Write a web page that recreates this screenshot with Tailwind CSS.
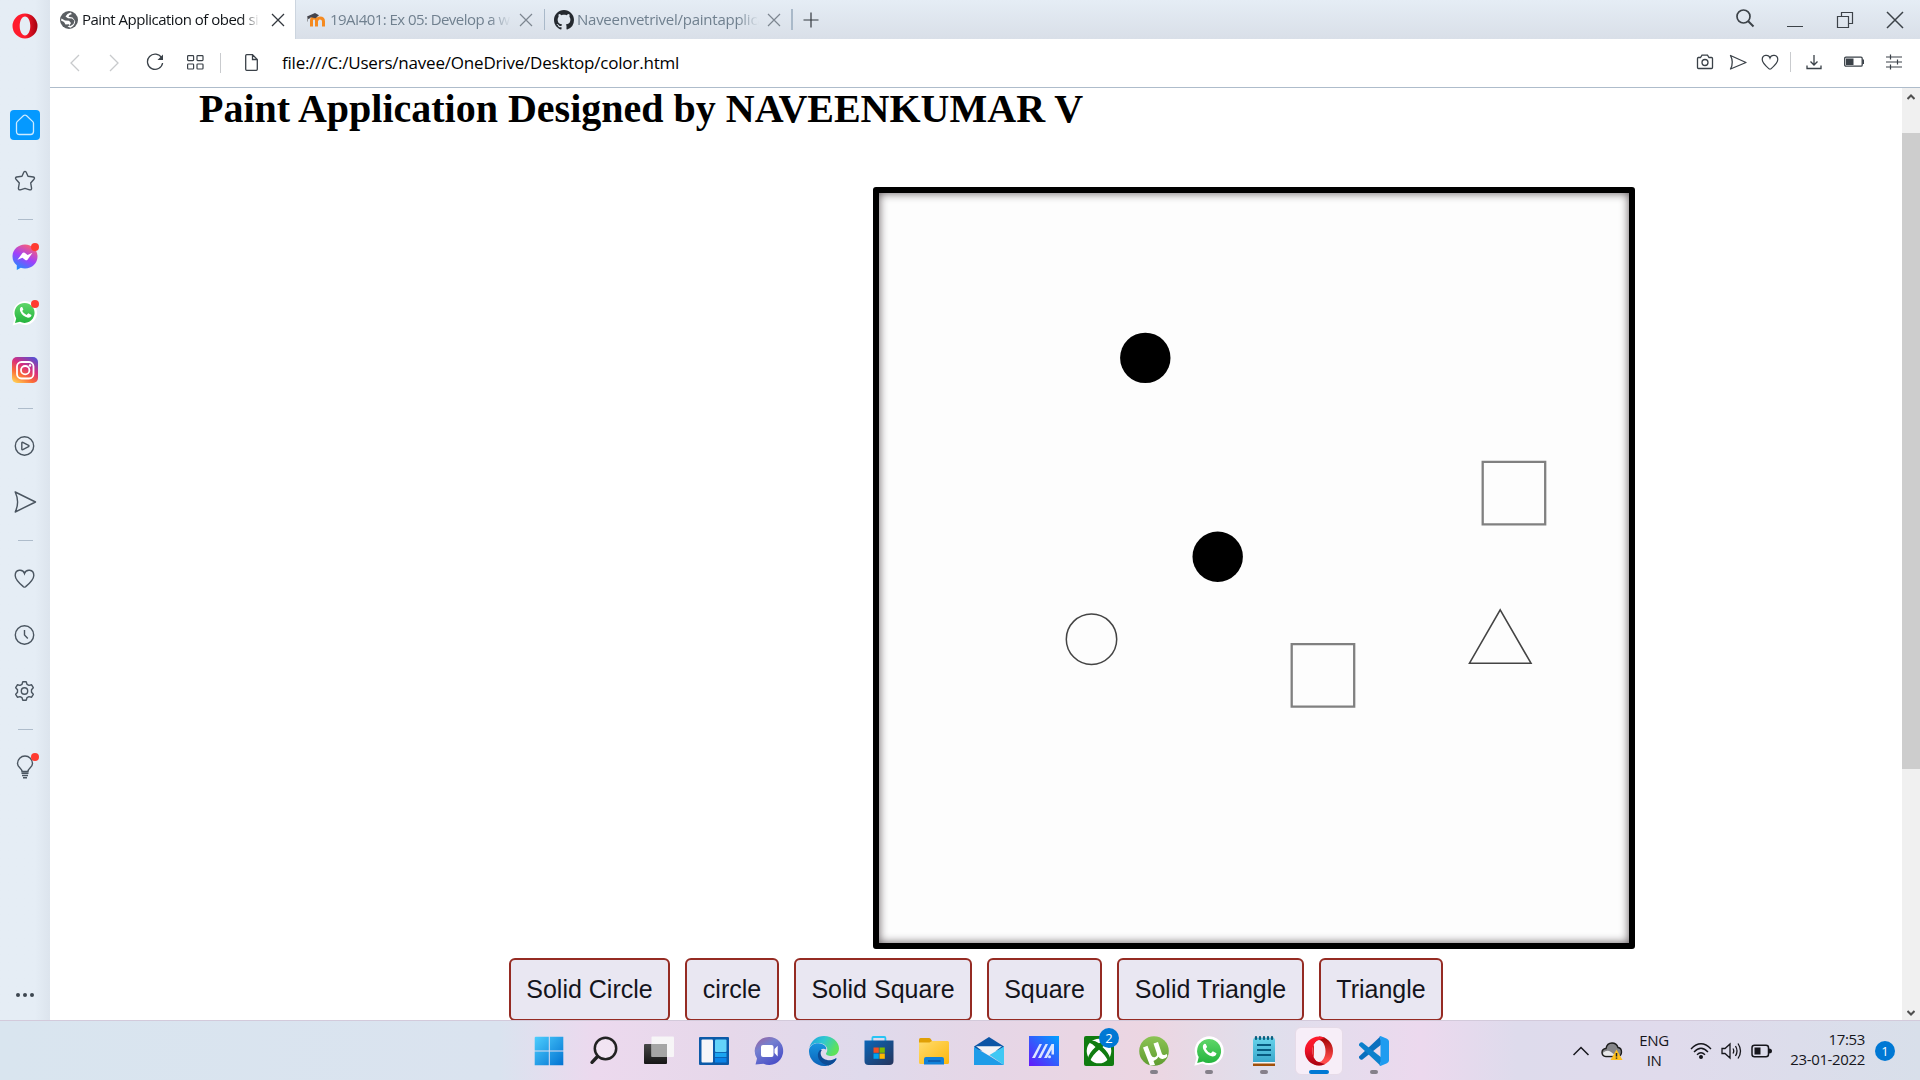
<!DOCTYPE html>
<html lang="en">
<head>
<meta charset="utf-8">
<title>Paint Application</title>
<script src="https://cdn.jsdelivr.net/npm/@tailwindcss/browser@4"></script>
</head>
<body class="w-[1920px] h-[1080px] overflow-hidden flex flex-col bg-white font-['Open_Sans','Noto_Sans',sans-serif]">
<svg class="absolute size-0">
  <defs>
    <linearGradient id="op" x1="0" y1="0" x2="1" y2="0"><stop offset="0" stop-color="#ff1b2d"/><stop offset=".5" stop-color="#ff1b2d"/><stop offset="1" stop-color="#a3000f"/></linearGradient>
    <linearGradient id="op1" x1="0" y1="0" x2="0" y2="1"><stop offset="0" stop-color="#ff1b2d"/><stop offset=".4" stop-color="#f5142a"/><stop offset="1" stop-color="#a50010"/></linearGradient>
    <linearGradient id="op2" x1="0" y1="0" x2="0" y2="1"><stop offset="0" stop-color="#9c0000"/><stop offset=".8" stop-color="#ff4b4b"/></linearGradient>
    <linearGradient id="ms" x1=".2" y1="1" x2=".7" y2="0"><stop offset="0" stop-color="#1393ff"/><stop offset=".5" stop-color="#a040fb"/><stop offset="1" stop-color="#ff6070"/></linearGradient>
    <linearGradient id="wa" x1="0" y1="0" x2="0" y2="1"><stop offset="0" stop-color="#5fd669"/><stop offset="1" stop-color="#24b43e"/></linearGradient>
    <linearGradient id="ig" x1=".2" y1="1" x2=".8" y2="0"><stop offset="0" stop-color="#ffc850"/><stop offset=".3" stop-color="#fb6a38"/><stop offset=".6" stop-color="#d82d7e"/><stop offset="1" stop-color="#5a4fd0"/></linearGradient>
    <linearGradient id="win" gradientUnits="userSpaceOnUse" x1="0" y1="0" x2="30" y2="30"><stop offset="0" stop-color="#4fd0ff"/><stop offset="1" stop-color="#0070d0"/></linearGradient>
    <linearGradient id="tv" x1="0" y1="0" x2="0" y2="1"><stop offset="0" stop-color="#484848"/><stop offset="1" stop-color="#161616"/></linearGradient>
    <linearGradient id="chat" x1="0" y1="0" x2=".6" y2="1"><stop offset="0" stop-color="#a0609a"/><stop offset=".4" stop-color="#7480d0"/><stop offset="1" stop-color="#4b50c8"/></linearGradient>
    <linearGradient id="ed1" x1="0" y1="0" x2="1" y2=".4"><stop offset="0" stop-color="#1a9fe0"/><stop offset=".5" stop-color="#30c8d0"/><stop offset="1" stop-color="#5ee25a"/></linearGradient>
    <linearGradient id="ed2" x1="0" y1="0" x2="0" y2="1"><stop offset="0" stop-color="#1795e0"/><stop offset="1" stop-color="#0c62b8"/></linearGradient>
    <linearGradient id="st" x1="0" y1="0" x2="1" y2="1"><stop offset="0" stop-color="#0a66b8"/><stop offset="1" stop-color="#26355c"/></linearGradient>
    <linearGradient id="fo" x1="0" y1="0" x2="1" y2="1"><stop offset="0" stop-color="#ffdc6e"/><stop offset="1" stop-color="#fcb70c"/></linearGradient>
    <linearGradient id="ma" x1="0" y1="1" x2="1" y2="0"><stop offset="0" stop-color="#6418fa"/><stop offset="1" stop-color="#00a2ff"/></linearGradient>
    <linearGradient id="ut" x1="0" y1="0" x2="0" y2="1"><stop offset="0" stop-color="#8cc455"/><stop offset="1" stop-color="#5f9c30"/></linearGradient>
    <linearGradient id="np" x1="0" y1="0" x2="0" y2="1"><stop offset="0" stop-color="#66d2ea"/><stop offset="1" stop-color="#3aa8cc"/></linearGradient>
  </defs>
</svg>

<div class="flex h-[1020px] shrink-0">
  <!-- Opera sidebar -->
  <aside class="w-[50px] shrink-0 flex flex-col items-center text-[#4a5560] bg-linear-to-r from-[#e5edf5] from-70% to-[#dce4ed]">
    <div class="h-[97px] pt-[13px]">
      <svg width="26" height="26" viewBox="0 0 26 26"><path fill="url(#op)" fill-rule="evenodd" d="M13 .5a12.5 12.5 0 1 0 0 25 12.5 12.5 0 1 0 0-25zM13 3.6c3 0 5.3 4 5.3 9.4s-2.300 9.400-5.300 9.400S7.700 18.400 7.700 13 10 3.600 13 3.600z"/></svg>
    </div>
    <div class="h-14 flex items-center"><div class="size-[30px] rounded bg-[#0599ff] flex items-center justify-center">
      <svg width="20" height="22" viewBox="0 0 20 22" fill="none" stroke="#cdeaff" stroke-width="1.300"><path d="M1.500 9.200Q1.500 8.300 2.200 7.600L8.600 1.600Q10 .5 11.400 1.600L17.800 7.600Q18.500 8.300 18.500 9.200V17.500Q18.500 20.500 15.500 20.500H4.500Q1.500 20.500 1.500 17.500Z"/></svg></div></div>
    <div class="h-14 flex items-center"><svg width="22" height="22" viewBox="0 0 22 22" fill="none" stroke="currentColor" stroke-width="1.400" stroke-linejoin="round"><path d="M9.800 2.200Q11 .6 12.200 2.200L14 6.200 19.400 7Q21.200 7.600 20 9.200L16.700 13 17.600 18.300Q17.600 20.200 15.600 19.800L11 18.400 6.400 19.800Q4.400 20.200 4.400 18.300L5.300 13 2 9.200Q.8 7.600 2.600 7L8 6.200Z"/></svg></div>
    <div class="h-5 flex items-center"><div class="w-[15px] h-px bg-[#aebccb]"></div></div>
    <div class="h-14 flex items-center relative"><svg width="26" height="26" viewBox="0 0 26 26"><path fill="url(#ms)" d="M13 .5C6 .5.5 5.700.5 12.500c0 3.800 1.600 6.700 4.300 8.800V26l4-2.200c1.300.5 2.700.7 4.200.7 7 0 12.500-5.200 12.500-12S20 .5 13 .5z"/><path fill="#fff" d="M5.500 15.800l5-6.800q1-1 2.200-.2l2.900 2.300 4.900-2.300-5 6.900q-1 1-2.200.2l-2.900-2.200z"/></svg><span class="absolute left-[19px] top-[14px] size-2 rounded-full bg-[#ff3b30]"></span></div>
    <div class="h-14 flex items-center relative"><svg width="26" height="26" viewBox="0 0 26 26"><path fill="#fff" d="M.5 25.500l2-6.700A12 12 0 1 1 7.400 23.600z"/><path fill="url(#wa)" d="M3 23l1.200-4.600A10 10 0 1 1 8 21.800z"/><path fill="#fff" d="M9.200 7q-2 1.300-1 4.200 2.200 5 7.800 6.600 3 0 3.500-2.800l-3.200-1.700-1.700 1.700q-3-1.200-4.400-4l1.200-1.500-1.200-2.500z"/></svg><span class="absolute left-[19px] top-[15px] size-2 rounded-full bg-[#ff3b30]"></span></div>
    <div class="h-[57px] flex items-center"><svg width="26" height="26" viewBox="0 0 26 26" fill="none" stroke="#fff"><rect width="26" height="26" rx="5" fill="url(#ig)" stroke="none"/><rect x="5" y="5" width="16.500" height="16.500" rx="4.500" stroke-width="1.800"/><circle cx="13.200" cy="13.200" r="4.200" stroke-width="1.800"/><circle cx="18" cy="8.500" r="1.200" fill="#fff" stroke="none"/></svg></div>
    <div class="h-5 flex items-center"><div class="w-[15px] h-px bg-[#aebccb]"></div></div>
    <div class="h-14 flex items-center"><svg width="22" height="22" viewBox="0 0 22 22" fill="none" stroke="currentColor" stroke-width="1.400" stroke-linejoin="round"><circle cx="10.500" cy="11" r="9.200"/><path d="M7.800 8v6q0 1 1 .7l5.800-3q.8-.7 0-1.300l-5.800-3q-1-.4-1 .6z"/></svg></div>
    <div class="h-14 flex items-center"><svg width="24" height="24" viewBox="0 0 24 24" fill="none" stroke="currentColor" stroke-width="1.400" stroke-linejoin="round"><path d="M2.200 2L22.500 12 2.200 22q4.800-10 0-20z"/></svg></div>
    <div class="h-[21px] flex items-center"><div class="w-[15px] h-px bg-[#aebccb]"></div></div>
    <div class="h-14 flex items-center"><svg width="22" height="20" viewBox="0 0 22 20" fill="none" stroke="currentColor" stroke-width="1.400"><path d="M10.500 4.500C9-.2 1.200 0 1.200 6.400c0 4.300 4.700 8.300 8.200 11.300q1.100.8 2.200 0c3.500-3 8.200-7 8.200-11.300C19.800 0 12 -.2 10.500 4.500z"/></svg></div>
    <div class="h-14 flex items-center"><svg width="22" height="22" viewBox="0 0 22 22" fill="none" stroke="currentColor" stroke-width="1.400"><circle cx="10.500" cy="11" r="9.200"/><path d="M10.500 6v5l3.300 3.500"/></svg></div>
    <div class="h-14 flex items-center"><svg width="22" height="22" viewBox="0 0 22 22" fill="none" stroke="currentColor" stroke-width="1.400" stroke-linejoin="round"><circle cx="10.500" cy="11" r="3.200"/><path d="M8.800 1.700h3.400l.8 2.600 2 1.100 2.600-.6 1.700 2.900-1.800 2v2.600l1.800 2-1.700 2.900-2.600-.6-2 1.100-.8 2.600H8.800L8 17.700l-2-1.100-2.600.6-1.700-2.900 1.800-2V9.700l-1.800-2 1.700-2.900 2.600.6 2-1.100z"/></svg></div>
    <div class="h-5 flex items-center"><div class="w-[15px] h-px bg-[#aebccb]"></div></div>
    <div class="h-14 flex items-center relative"><svg width="18" height="24" viewBox="0 0 18 24" fill="none" stroke="currentColor" stroke-width="1.400"><path d="M6 16.500C6 13.500 1.500 12.500 1.500 8.500a7.500 7.500 0 0 1 15 0c0 4-4.500 5-4.500 8zM5.500 18.300h7M6 20.500h6M7 22.800h4"/></svg><span class="absolute left-[15px] top-[14px] size-2 rounded-full bg-[#ff3b30]"></span></div>
    <div class="mt-auto h-[51px] flex gap-[3px]"><i class="size-1 mt-6 rounded-full bg-[#3d4650]"></i><i class="size-1 mt-6 rounded-full bg-[#3d4650]"></i><i class="size-1 mt-6 rounded-full bg-[#3d4650]"></i></div>
  </aside>

  <div class="w-[1870px] flex flex-col">
    <!-- Tab strip -->
    <div class="h-[39px] shrink-0 flex bg-linear-to-b from-[#e5edf5] to-[#d9dfe8] text-[15px] leading-[39px] whitespace-nowrap">
      <div class="w-[246px] bg-white flex items-center pl-[10px] border-r border-[#ccd5df]">
        <svg width="18" height="18" viewBox="0 0 18 18"><circle cx="9" cy="9" r="9" fill="#5a5e62"/><path fill="#fff" d="M10.500 1.500L7.500 3 5.500 5.500 8 7.200l4 .3 2.500 2.300-1 3.200-3 2-1-.5 1.500-2.500-2-2.200L5 9.500 1.500 7.500 1 9.500 4 11l1.500 2.500L9 13.300l.5 1.200-2 1 3 1.200q4.500-2 4.700-6.700L12.500 6.500 8.500 5.700 9.500 4l2.500-1z"/></svg>
        <span class="ml-[4px] w-[181px] overflow-hidden text-[#101418] tracking-[-0.5px] mask-r-from-88% mask-r-to-98%">Paint Application of obed si</span>
        <svg class="ml-2" width="14" height="14" viewBox="0 0 14 14" stroke="#33383e" stroke-width="1.300"><path d="M1 1l12 12M13 1L1 13"/></svg>
      </div>
      <div class="w-[249px] flex items-center pl-[10px] relative text-[#70808f]">
        <svg width="20" height="16" viewBox="0 0 20 16"><path fill="none" stroke="#f58a20" stroke-width="3" d="M5.500 14.500V8.500q0-2.500 2.500-2.500t2.500 2.500V14.500M11 8.500Q11.500 6 14 6q3.500 0 3.500 3.500v5"/><path fill="#44444c" d="M1 4.500L9 1l4 2.200-3.500 3L5 5.200 2.500 7.300z"/><path stroke="#777" stroke-width=".7" d="M1.500 5v4.500"/></svg>
        <span class="ml-[4px] w-[181px] overflow-hidden tracking-[-0.55px] mask-r-from-88% mask-r-to-100%">19AI401: Ex 05: Develop a w</span>
        <svg class="ml-2" width="14" height="14" viewBox="0 0 14 14" stroke="#7d8690" stroke-width="1.200"><path d="M1 1l12 12M13 1L1 13"/></svg>
        <i class="absolute right-0 top-[9px] w-px h-[21px] bg-[#a9b9c9]"></i>
      </div>
      <div class="w-[248px] flex items-center pl-[9px] relative text-[#70808f]">
        <svg width="20" height="20" viewBox="0 0 16 16"><path fill="#24292f" d="M8 0C3.580 0 0 3.580 0 8c0 3.540 2.290 6.530 5.470 7.590.4.070.55-.17.55-.38 0-.19-.01-.82-.01-1.490-2.010.37-2.530-.49-2.690-.94-.09-.23-.48-.94-.82-1.130-.28-.15-.68-.52-.01-.53.63-.01 1.080.58 1.230.82.72 1.210 1.870.87 2.330.66.070-.52.280-.87.510-1.070-1.780-.2-3.640-.89-3.640-3.950 0-.87.310-1.590.82-2.150-.08-.2-.36-1.020.08-2.120 0 0 .67-.21 2.200.82.640-.18 1.320-.27 2-.27s1.360.090 2 .27c1.530-1.040 2.200-.82 2.200-.82.440 1.100.160 1.920.080 2.120.510.560.820 1.270.820 2.150 0 3.070-1.870 3.750-3.650 3.950.290.250.540.730.540 1.480 0 1.070-.01 1.930-.01 2.200 0 .210.150.460.550.380A8.010 8.010 0 0 0 16 8c0-4.420-3.580-8-8-8z"/></svg>
        <span class="ml-[3px] w-[182px] overflow-hidden tracking-[-0.25px] mask-r-from-88% mask-r-to-100%">Naveenvetrivel/paintapplica</span>
        <svg class="ml-2" width="14" height="14" viewBox="0 0 14 14" stroke="#7d8690" stroke-width="1.200"><path d="M1 1l12 12M13 1L1 13"/></svg>
        <i class="absolute right-0 top-[9px] w-[2px] h-[21px] bg-[#a9b9c9]"></i>
      </div>
      <div class="pl-[10px] flex items-center"><svg width="16" height="16" viewBox="0 0 16 16" stroke="#33383e" stroke-width="1.200"><path d="M8 .5v15M.5 8h15"/></svg></div>
      <div class="ml-auto flex text-[#3c4248]">
        <div class="w-[50px] flex items-center justify-center"><svg class="mb-1" width="20" height="20" viewBox="0 0 20 20" fill="none" stroke="currentColor"><circle cx="8.500" cy="8.500" r="6.500" stroke-width="1.700"/><path stroke-width="2" d="M13 13l5.500 5.500"/></svg></div>
        <div class="w-[50px] flex justify-center"><i class="w-4 h-px mt-[26px] bg-[#3c4248]"></i></div>
        <div class="w-[50px] flex items-center justify-center"><svg width="18" height="18" viewBox="0 0 18 18" fill="none" stroke="currentColor" stroke-width="1.200"><path d="M1.500 5.500h11v11h-11zM5.500 5.500v-4h11v11h-4"/></svg></div>
        <div class="w-[50px] flex items-center justify-center"><svg width="18" height="18" viewBox="0 0 18 18" stroke="currentColor" stroke-width="1.500"><path d="M1 1l16 16M17 1L1 17"/></svg></div>
      </div>
    </div>
    <!-- Address bar -->
    <div class="h-[49px] shrink-0 flex items-center bg-white border-b border-[#aebccb] text-[#3a4148]">
      <svg class="ml-[19px]" width="11" height="18" viewBox="0 0 11 18" fill="none" stroke="#c8cacc" stroke-width="1.300"><path d="M10 1L2 9l8 8"/></svg>
      <svg class="ml-[29px]" width="11" height="18" viewBox="0 0 11 18" fill="none" stroke="#c8cacc" stroke-width="1.300"><path d="M1 1l8 8-8 8"/></svg>
      <svg class="ml-[26px] mb-0.5" width="18" height="18" viewBox="0 0 18 18" fill="none" stroke="currentColor" stroke-width="1.300"><path d="M15.700 5A7.600 7.600 0 1 0 16.600 10"/><path fill="currentColor" stroke="none" d="M17 1.500V7h-5.500z"/></svg>
      <svg class="ml-[23px] mb-0.5" width="17" height="15" viewBox="0 0 17 15" fill="none" stroke="currentColor" stroke-width="1.200"><rect x=".6" y=".6" width="6" height="5" rx=".8"/><rect x="10" y=".6" width="6" height="5" rx=".8"/><rect x=".6" y="9" width="6" height="5" rx=".8"/><rect x="10" y="9" width="6" height="5" rx=".8"/></svg>
      <i class="ml-4 w-px h-5 bg-[#c9cbce]"></i>
      <svg class="ml-6 mb-0.5" width="13" height="17" viewBox="0 0 13 17" fill="none" stroke="currentColor" stroke-width="1.300"><path d="M.7 1.700q0-1 1-1H7.500l4.800 4.800v9.800q0 1-1 1H1.700q-1 0-1-1zM7.500.7v4.800h4.800"/></svg>
      <span class="ml-[24px] mb-px text-[17px] tracking-[-0.2px] leading-6 text-[#000] whitespace-nowrap">file:///C:/Users/navee/OneDrive/Desktop/color.html</span>
      <div class="ml-auto mr-[6px] mb-0.5 flex items-center">
        <div class="w-[34px] flex justify-center"><svg width="18" height="16" viewBox="0 0 18 16" fill="none" stroke="currentColor" stroke-width="1.300"><path d="M2 3.500h2.500L6 1.200h5.500L13 3.500h2.500q1 0 1 1v9q0 1-1 1h-13q-1 0-1-1v-9q0-1 1-1"/><circle cx="9" cy="8.500" r="3"/></svg></div>
        <div class="w-8 flex justify-center"><svg width="18" height="16" viewBox="0 0 18 16" fill="none" stroke="currentColor" stroke-width="1.300" stroke-linejoin="round"><path d="M1.500 1.500L17 8.500 1.500 15q3.600-6.500 0-13.500z"/></svg></div>
        <div class="w-8 flex justify-center"><svg width="18" height="17" viewBox="0 0 22 20" fill="none" stroke="currentColor" stroke-width="1.500"><path d="M11 4.500C9.500-.2 1.500 0 1.500 6.400c0 4.300 4.800 8.300 8.300 11.300q1.200.8 2.400 0c3.500-3 8.300-7 8.300-11.300C20.500 0 12.500-.2 11 4.500z"/></svg></div>
        <div class="w-2 flex justify-center"><i class="w-px h-5 bg-[#c9cbce]"></i></div>
        <div class="w-10 flex justify-center"><svg width="16" height="16" viewBox="0 0 16 16" fill="none" stroke="currentColor" stroke-width="1.300"><path d="M8 1v9.500M4.500 7.500L8 11l3.500-3.500M1 11.500v3h14v-3"/></svg></div>
        <div class="w-10 flex justify-center"><svg width="20" height="12" viewBox="0 0 20 12"><rect x=".7" y="1.200" width="17.500" height="9" rx="1.200" fill="none" stroke="currentColor" stroke-width="1.300"/><path fill="currentColor" d="M2 2.500h7.500v6.500H2zM18.500 3.500H20v4.500h-1.500z"/></svg></div>
        <div class="w-10 flex justify-center"><svg width="16" height="16" viewBox="0 0 16 16" stroke="currentColor" stroke-width="1.200"><path d="M0 3h16M0 8h16M0 13h16M4.500 .5v5M11.500 5.500v5M4.500 10.500v5"/></svg></div>
      </div>
    </div>
    <!-- Page -->
    <div class="h-[932px] flex">
      <main class="w-[1852px] h-full overflow-hidden bg-white">
        <h1 class="ml-[149px] h-[99px] text-[40px] leading-[42px] font-bold text-black whitespace-nowrap font-['Liberation_Serif',serif]">Paint Application Designed by NAVEENKUMAR V</h1>
        <div class="ml-[823px] w-[762px] h-[762px] border-[6px] border-black rounded-[3px] bg-[#fdfdfd] shadow-[inset_0_0_10px_rgba(40,30,35,0.75)]">
          <svg width="750" height="750" viewBox="879 193 750 750" fill="none">
            <circle cx="1145.300" cy="357.900" r="25.200" fill="#000"/>
            <circle cx="1217.700" cy="556.700" r="25.200" fill="#000"/>
            <circle cx="1091.500" cy="639.200" r="25.200" stroke="#444" stroke-width="1.500"/>
            <path stroke="#808080" stroke-width="2.300" d="M1482.700 461.800h62.500v62.500h-62.500zM1291.700 644.200h62.500v62.500h-62.500z"/>
            <path stroke="#444" stroke-width="1.600" d="M1500.200 609.800L1531 663.200h-61.500z"/>
          </svg>
        </div>
        <div class="ml-[459px] mt-[9px] flex gap-[15px] text-[25px] text-[#14141c] whitespace-nowrap font-['Liberation_Sans',sans-serif]">
          <div class="w-[161px] h-[63px] border-2 border-[#952b23] rounded-[6px] bg-[#e9e7f2] flex items-center justify-center">Solid Circle</div>
          <div class="w-[94px] h-[63px] border-2 border-[#952b23] rounded-[6px] bg-[#e9e7f2] flex items-center justify-center">circle</div>
          <div class="w-[178px] h-[63px] border-2 border-[#952b23] rounded-[6px] bg-[#e9e7f2] flex items-center justify-center">Solid Square</div>
          <div class="w-[115px] h-[63px] border-2 border-[#952b23] rounded-[6px] bg-[#e9e7f2] flex items-center justify-center">Square</div>
          <div class="w-[187px] h-[63px] border-2 border-[#952b23] rounded-[6px] bg-[#e9e7f2] flex items-center justify-center">Solid Triangle</div>
          <div class="w-[124px] h-[63px] border-2 border-[#952b23] rounded-[6px] bg-[#e9e7f2] flex items-center justify-center">Triangle</div>
        </div>
      </main>
      <div class="w-[18px] h-full bg-[#f0f0f0] flex flex-col items-center">
        <div class="h-[45px] pt-[6px]"><svg width="8" height="6" viewBox="0 0 8 6" fill="none" stroke="#505050" stroke-width="2"><path d="M.5 5L4 1.500 7.500 5"/></svg></div>
        <div class="w-full h-[636px] bg-[#cdcdcd]"></div>
        <div class="mt-auto pb-[4px]"><svg width="8" height="6" viewBox="0 0 8 6" fill="none" stroke="#505050" stroke-width="2"><path d="M.5 1L4 4.500 7.500 1"/></svg></div>
      </div>
    </div>
  </div>
</div>

<!-- Windows taskbar -->
<div class="h-[60px] shrink-0 flex">
  <div class="w-full flex border-t border-[#d3cadb] bg-[linear-gradient(90deg,#d9e5ef_0,#dae3ef_26%,#ecd9ee_31%,#e6d8ea_38%,#dfdaec_45%,#e6d6e6_52%,#ecd6e2_60%,#dfdfec_66%,#ecd9ee_74%,#dedbec_79%,#e0dbec_87%,#d8dfea_100%)]">
    <div class="pl-[521px] flex">
      <div class="w-[55px] h-[59px] flex items-center justify-center"><svg width="30" height="30" viewBox="0 0 30 30" fill="url(#win)"><path d="M1.500.7H14.800V14.500H.7V1.500zM15.800.7H29.300V14.500H15.800zM.7 15.500H14.800V29.300H.7zM15.800 15.500H29.300V29.300H15.800z"/></svg></div>
      <div class="w-[55px] flex items-center justify-center"><svg width="30" height="30" viewBox="0 0 30 30" fill="none" stroke="#222"><circle cx="16.500" cy="12.500" r="10.700" fill="#fff" fill-opacity=".3" stroke-width="2.500"/><path stroke-width="3.400" stroke-linecap="round" d="M8.500 20.500L3 26.300"/></svg></div>
      <div class="w-[55px] flex items-center justify-center"><svg width="30" height="30" viewBox="0 0 30 30"><rect y="8" width="23" height="20" rx="1" fill="url(#tv)"/><rect x="7.500" y=".5" width="22.500" height="20.500" rx="1" fill="#f8f8f8" fill-opacity=".9"/><path fill="#9a9a9a" fill-opacity=".85" d="M7.500 8H23v13H7.500z"/></svg></div>
      <div class="w-[55px] flex items-center justify-center"><svg width="30" height="28" viewBox="0 0 30 28"><rect width="30" height="28" rx="1" fill="#0c5aa8"/><rect x="2.500" y="2.500" width="11.500" height="23" rx="1" fill="#f5f6f8"/><rect x="16" y="2.500" width="11.500" height="12.500" rx="1" fill="#64d4fa"/><path fill="#1ba4f0" d="M16 15.800h11.500V20H16z"/><path fill="#0a84e8" d="M16 20.800h11.500v4.700H16z"/></svg></div>
      <div class="w-[55px] flex items-center justify-center"><svg width="30" height="30" viewBox="0 0 30 30"><path fill="url(#chat)" d="M15 1a14 14 0 1 1-5.500 26.800L1.500 28.500l1.500-6A14 14 0 0 1 15 1z"/><rect x="7" y="9" width="12.500" height="12" rx="2" fill="#fff"/><path fill="#fff" d="M20.500 13l3.200-3.300V20.500L20.500 17z"/></svg></div>
      <div class="w-[55px] flex items-center justify-center"><svg width="30" height="30" viewBox="0 0 30 30"><path fill="url(#ed2)" d="M0 14C1 9 6 6.500 11 7.500c5 1 7 4 6 6-3-2-6.500 0-6.500 4 0 5 5 8.500 10.500 7.500 3-.5 5-2 6-2.800.6 0 .6.500.3 1C25 27.500 20.500 30 15 30 6.500 30-.5 23 0 14z"/><path fill="#0c4b96" d="M11 14c-5 5-1 14 8.500 15.500 3.500-1 6-3.200 7.800-6.300.3-.6-.3-1-.8-.7C21 26 13 24 11.800 18.500c-.5-2 .2-3.500 1.200-4.500z"/><path fill="url(#ed1)" d="M.3 12C2 4.500 8 0 15 0c8.500 0 15 6 15 12.500 0 4.500-3.500 7.500-7.500 7.500-3.500 0-5.800-1.200-5.500-2.500.5-1 1.300-1.700 1.300-4C18.300 9.800 14 7 9.500 7 5 7 1.500 9 .3 12z"/></svg></div>
      <div class="w-[55px] flex items-center justify-center"><svg width="30" height="30" viewBox="0 0 30 30"><path fill="none" stroke="#28c4f4" stroke-width="1.800" d="M8.400 6V2q0-1 1-1h11q1 0 1 1v4"/><path fill="url(#st)" d="M.5 4.500h29V25q0 4-4 4h-21q-4 0-4-4z"/><path fill="#f25022" d="M9.500 11.500h5.300v5.300H9.500z"/><path fill="#7fba00" d="M15.500 11.500h5.300v5.300h-5.300z"/><path fill="#00a4ef" d="M9.500 17.500h5.300v5.300H9.500z"/><path fill="#ffb900" d="M15.500 17.500h5.300v5.300h-5.300z"/></svg></div>
      <div class="w-[55px] flex items-center justify-center"><svg width="30" height="28" viewBox="0 0 30 28"><path fill="#e0a006" d="M0 2.500Q0 1 1.500 1H10q1 0 1.800 1l1.200 2v4H0z"/><path fill="url(#fo)" d="M0 5.500h10.500L13 4h15.500Q30 4 30 5.500v20q0 1.500-1.500 1.500h-27Q0 27 0 25.500z"/><path fill="#1080d8" d="M5 27.500V22q0-2 2-2h16q2 0 2 2v5.500z"/><path stroke="#0a50a0" stroke-width="1.300" d="M9 24h12.500"/></svg></div>
      <div class="w-[55px] flex items-center justify-center"><svg width="30" height="28" viewBox="0 0 30 28"><path fill="#0b55a5" d="M0 9.500L15 0l15 9.500-3 4H3z"/><path fill="#f4f4f6" d="M2 9.300h26l-12 9-2 0z"/><path fill="#40c8f4" d="M30 9.500V28L15.500 18z"/><path fill="#1e9ce8" d="M0 28V10l15.500 9L30 28z"/></svg></div>
      <div class="w-[55px] flex items-center justify-center"><svg width="30" height="30" viewBox="0 0 30 30"><path fill="url(#ma)" d="M0 0h30v30H0z"/><path fill="#dce6ff" d="M3 22L10.500 8H13L6 22zM9 22L16.500 8H19L12 22zM15 22L22.500 8H25v10.500h-2.500v-5L18 22z"/><circle cx="20.500" cy="20.800" r="1.500" fill="#dce6ff"/></svg></div>
      <div class="w-[55px] flex items-center justify-center relative"><svg width="30" height="30" viewBox="0 0 30 30"><rect width="30" height="30" rx="2" fill="#107c10"/><circle cx="15" cy="15" r="12.300" fill="#fff"/><path fill="#107c10" d="M6 4.500Q11 4 15 7.200 19 4 24 4.500L25 6.500q-3.500 1-6.500 4.500Q25.500 17.500 26 22.500l-2 2.500Q21 18.500 15 13.800 9 18.500 6 25l-2-2.500Q4.500 17.500 11.500 11q-3-3.500-6.500-4.500z"/></svg><span class="absolute left-[28px] top-[7px] size-5 rounded-full bg-[#0078d4] text-white text-[13px] leading-5 text-center">2</span></div>
      <div class="w-[55px] flex items-center justify-center relative"><svg width="30" height="30" viewBox="0 0 30 30"><circle cx="15" cy="15" r="14.800" fill="url(#ut)"/><path fill="#fff" d="M4 11.500l4.500-1.800L12 19q1.500 3 4.200 2t1.500-4.200L14.500 7.500 19 6l3.800 11.500q.8 2 2.800 1.500l2.200-1 .6 2.200Q26 23.500 23 23q-2.500-.3-3.500-2.200Q18 24 14.500 25L16 29l-5 .5z"/></svg><i class="absolute bottom-1.5 w-2 h-1 rounded-full bg-[#85808a]"></i></div>
      <div class="w-[55px] flex items-center justify-center relative"><svg width="30" height="30" viewBox="0 0 26 26"><path fill="#fff" d="M.3 25.800l1.800-7A12.600 12.600 0 1 1 7.200 23.900z"/><path fill="url(#wa)" d="M2.800 23.300l1.300-5A10.400 10.400 0 1 1 7.800 22z"/><path fill="#fff" d="M9 6.800q-2 1.400-1 4.400 2.200 5 8 6.600 3 0 3.500-2.800l-3.200-1.700-1.700 1.700q-3-1.200-4.400-4l1.200-1.500-1.200-2.500z"/></svg><i class="absolute bottom-1.5 w-2 h-1 rounded-full bg-[#85808a]"></i></div>
      <div class="w-[55px] flex items-center justify-center relative"><svg width="24" height="30" viewBox="0 0 24 30"><path fill="#a0500a" d="M1 26h22v4H1z"/><path fill="#f4f4f4" d="M1 24h22v3.500H1z"/><path fill="url(#np)" d="M1 4q0-2 2-2h18q2 0 2 2v22H1z"/><path stroke="#075a80" stroke-width="1.800" d="M5 9h14M5 14h14M5 19h14"/><path stroke="#0b607f" stroke-width="2.400" stroke-linecap="round" d="M4 1.300v1.500M8 1.300v1.500M12 1.300v1.500M16 1.300v1.500M20 1.300v1.500"/></svg><i class="absolute bottom-1.5 w-2 h-1 rounded-full bg-[#85808a]"></i></div>
      <div class="w-[55px] flex items-center justify-center relative"><div class="size-12 rounded-md bg-[#f7eef8] border border-[#e6dbe8] flex items-center justify-center"><svg width="30" height="30" viewBox="0 0 30 30"><path fill="url(#op2)" fill-rule="evenodd" d="M15 .5a14 14.500 0 0 1 0 29 14 14.500 0 0 1-5-1V4q2-2 5-2zM15 4c-3.500 0-6.500 5-6.500 11S11.500 26 15 26s6.500-5 6.500-11S18.500 4 15 4z"/><path fill="url(#op1)" fill-rule="evenodd" d="M15 .5C7 .5.8 7 .8 15S7 29.500 15 29.500q3 0 6-1.500-3-.3-6-2c-3.500 0-6.500-5-6.500-11S11.500 4 15 4q3-1.700 6-2-3-1.500-6-1.500z"/></svg></div><i class="absolute bottom-1.5 w-5 h-1 rounded-full bg-[#0078d4]"></i></div>
      <div class="w-[55px] flex items-center justify-center relative"><svg width="30" height="30" viewBox="0 0 30 30"><path fill="#0a6fbe" d="M0 20.500L21 .8 23 8 3.500 23.500q-1 .7-2 0L0 22z"/><path fill="#0b80cc" d="M0 9.500L21 29.200 23 22 3.500 6.500q-1-.7-2 0L0 8z"/><path fill="#1f9cf0" d="M21.500 0L28 2.800Q30 4 30 5.500v19q0 1.500-2 2.700L21.500 30q-1.500 0-.8-1.800.8-.5.800-1.700v-23q0-1.200-.8-1.700Q20 0 21.500 0z"/></svg><i class="absolute bottom-1.5 w-2 h-1 rounded-full bg-[#85808a]"></i></div>
    </div>
    <!-- System tray -->
    <div class="ml-auto flex items-center text-[#16161c] text-[15px] leading-5">
      <svg width="16" height="10" viewBox="0 0 16 10" fill="none" stroke="currentColor" stroke-width="1.500"><path d="M.5 9L8 1.500 15.500 9"/></svg>
      <svg class="ml-3" width="22" height="20" viewBox="0 0 22 20"><path fill="#858589" stroke="#1c1c1c" stroke-width="1.400" d="M5 15.500Q1 15 1 11.500T5 7.500Q6 2 11 2q4.500 0 6 4.500 3.500.5 3.500 4.500t-4 4.500z"/><path fill="#e8e8ea" d="M5 14.800Q2 14.500 2 11.800 6 8 10 11l5 3.800z"/><path fill="#ffc01e" d="M15.500 8.500L21.500 19H9.500z"/><path stroke="#222" stroke-width="1.500" d="M15.500 12v3.500M15.500 16.500v1.300"/></svg>
      <div class="ml-[15px] mb-0.5 w-8 text-center tracking-[-0.4px]">ENG<br>IN</div>
      <svg class="ml-5" width="22" height="18" viewBox="0 0 22 18" fill="none" stroke="currentColor" stroke-width="1.400"><path d="M1 7q10-10.500 20 0M4 10q7-7.500 14 0M7 12.800q4-4 8 0"/><circle cx="11" cy="15" r="1.300" fill="currentColor"/></svg>
      <svg class="ml-[9px]" width="22" height="18" viewBox="0 0 22 18" fill="none" stroke="currentColor" stroke-width="1.300"><path d="M1 6.500v5h3l5 4.500V2L4 6.500zM12 6.500q1.500 2.500 0 5M14.500 4q3 5 0 10M17 1.500q5 7.500 0 15"/></svg>
      <svg class="ml-2" width="22" height="14" viewBox="0 0 22 14"><rect x="1" y="1.200" width="16.500" height="11.500" rx="2.500" fill="none" stroke="currentColor" stroke-width="1.500"/><path fill="currentColor" d="M3.500 3.500h6v7h-6zM18 4.500q3 0 3 2.500t-3 2.500z"/></svg>
      <div class="w-[92px] mb-1 text-right tracking-[-0.35px] whitespace-nowrap">17:53<br>23-01-2022</div>
      <span class="ml-[10px] mr-[25px] size-5 rounded-full bg-[#0078d4] text-white text-[13px] leading-5 text-center">1</span>
    </div>
  </div>
</div>
</body>
</html>
